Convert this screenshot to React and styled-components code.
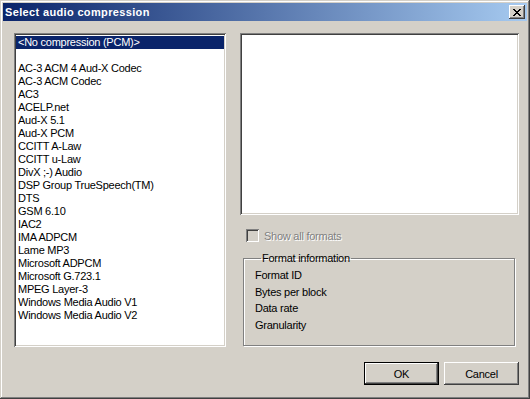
import styled, { createGlobalStyle } from "styled-components";

const GlobalStyle = createGlobalStyle`
  html, body {
    margin: 0;
    padding: 0;
    background: #d4d0c8;
  }
  * {
    box-sizing: border-box;
  }
`

const codecs = [
  "<No compression (PCM)>",
  "",
  "AC-3 ACM 4 Aud-X Codec",
  "AC-3 ACM Codec",
  "AC3",
  "ACELP.net",
  "Aud-X 5.1",
  "Aud-X PCM",
  "CCITT A-Law",
  "CCITT u-Law",
  "DivX ;-) Audio",
  "DSP Group TrueSpeech(TM)",
  "DTS",
  "GSM 6.10",
  "IAC2",
  "IMA ADPCM",
  "Lame MP3",
  "Microsoft ADPCM",
  "Microsoft G.723.1",
  "MPEG Layer-3",
  "Windows Media Audio V1",
  "Windows Media Audio V2",
];

const formatInfo = ["Format ID", "Bytes per block", "Data rate", "Granularity"];

const App = () => {
  return (
    <>
      <GlobalStyle />
      <Window>
        <Caption>
          <Title>Select audio compression</Title>
          <CloseButton aria-label="Close">
            <svg width="8" height="7" viewBox="0 0 8 7" shapeRendering="crispEdges">
              <path
                d="M0 0h2v1h-2zM6 0h2v1h-2zM1 1h2v1h-2zM5 1h2v1h-2zM2 2h4v1h-4zM3 3h2v1h-2zM2 4h4v1h-4zM1 5h2v1h-2zM5 5h2v1h-2zM0 6h2v1h-2zM6 6h2v1h-2z"
                fill="#000"
              />
            </svg>
          </CloseButton>
        </Caption>
        <Body>
          <Columns>
            <ListBox>
              {codecs.map((name, i) => (
                <ListItem key={i} selected={i === 0}>
                  {name || "\u00a0"}
                </ListItem>
              ))}
            </ListBox>
            <RightColumn>
              <Preview />
              <CheckRow>
                <CheckBox />
                <CheckLabel>Show all formats</CheckLabel>
              </CheckRow>
              <GroupBox>
                <Legend>Format information</Legend>
                {formatInfo.map((label) => (
                  <InfoLine key={label}>{label}</InfoLine>
                ))}
              </GroupBox>
            </RightColumn>
          </Columns>
          <ButtonRow>
            <Button isDefault>OK</Button>
            <Button>Cancel</Button>
          </ButtonRow>
        </Body>
      </Window>
    </>
  )
}

const Window = styled.div`
  width: 530px;
  height: 399px;
  padding: 3px;
  background: #d4d0c8;
  font-family: "Liberation Sans", Arial, sans-serif;
  font-size: 11px;
  letter-spacing: -0.25px;
  color: #000;
  box-shadow: inset -1px -1px #404040, inset 1px 1px #d4d0c8,
    inset -2px -2px #808080, inset 2px 2px #fff;
  display: flex;
  flex-direction: column;
`

const Caption = styled.div`
  height: 18px;
  display: flex;
  align-items: center;
  justify-content: space-between;
  padding: 0 2px 0 2px;
  background: linear-gradient(to right, #0a246a, #a6caf0);
`

const Title = styled.div`
  color: #fff;
  font-weight: bold;
  font-size: 11px;
  letter-spacing: 0.35px;
`

const CloseButton = styled.div`
  width: 16px;
  height: 14px;
  background: #d4d0c8;
  display: flex;
  align-items: center;
  justify-content: center;
  box-shadow: inset -1px -1px #404040, inset 1px 1px #fff,
    inset -2px -2px #808080;
`

const Body = styled.div`
  flex: 1;
  padding: 12px 8px 0 11px;
  display: flex;
  flex-direction: column;
`

const Columns = styled.div`
  display: flex;
  gap: 14px;
`

const ListBox = styled.div`
  width: 212px;
  height: 314px;
  background: #fff;
  padding: 3px 2px 2px 2px;
  box-shadow: inset 1px 1px #808080, inset -1px -1px #fff,
    inset 2px 2px #404040, inset -2px -2px #d4d0c8;
`

const ListItem = styled.div`
  height: 13px;
  line-height: 13px;
  padding-left: 2px;
  white-space: nowrap;
  background: ${(p) => (p.selected ? "#0a246a" : "transparent")};
  color: ${(p) => (p.selected ? "#fff" : "#000")};
`

const RightColumn = styled.div`
  width: 279px;
  display: flex;
  flex-direction: column;
`

const Preview = styled.div`
  height: 182px;
  background: #fff;
  box-shadow: inset 1px 1px #808080, inset -1px -1px #fff,
    inset 2px 2px #404040, inset -2px -2px #d4d0c8;
`

const CheckRow = styled.div`
  display: flex;
  align-items: center;
  gap: 5px;
  margin: 14px 0 0 6px;
  height: 13px;
`

const CheckBox = styled.div`
  width: 13px;
  height: 13px;
  background: #d4d0c8;
  box-shadow: inset 1px 1px #808080, inset -1px -1px #fff,
    inset 2px 2px #404040, inset -2px -2px #d4d0c8;
`

const CheckLabel = styled.span`
  color: #808080;
  text-shadow: 1px 1px #fff;
`

const GroupBox = styled.fieldset`
  margin: 10px 4px 0 3px;
  height: 94px;
  padding: 2px 0 0 11px;
  border: 1px solid #808080;
  box-shadow: 1px 1px #fff, inset 1px 1px #fff;
  display: flex;
  flex-direction: column;
`

const Legend = styled.legend`
  padding: 0 1px;
  margin-left: 6px;
  line-height: 13px;
`

const InfoLine = styled.div`
  height: 16.5px;
  line-height: 16.5px;
`

const ButtonRow = styled.div`
  display: flex;
  justify-content: flex-end;
  gap: 5px;
  margin-top: 15px;
`

const Button = styled.div`
  width: 75px;
  height: 23px;
  display: flex;
  align-items: center;
  justify-content: center;
  background: #d4d0c8;
  box-shadow: ${(p) =>
    p.isDefault
      ? "inset 0 0 0 1px #000, inset -2px -2px #404040, inset 2px 2px #fff, inset -3px -3px #808080"
      : "inset -1px -1px #404040, inset 1px 1px #fff, inset -2px -2px #808080"};
`

export default App
